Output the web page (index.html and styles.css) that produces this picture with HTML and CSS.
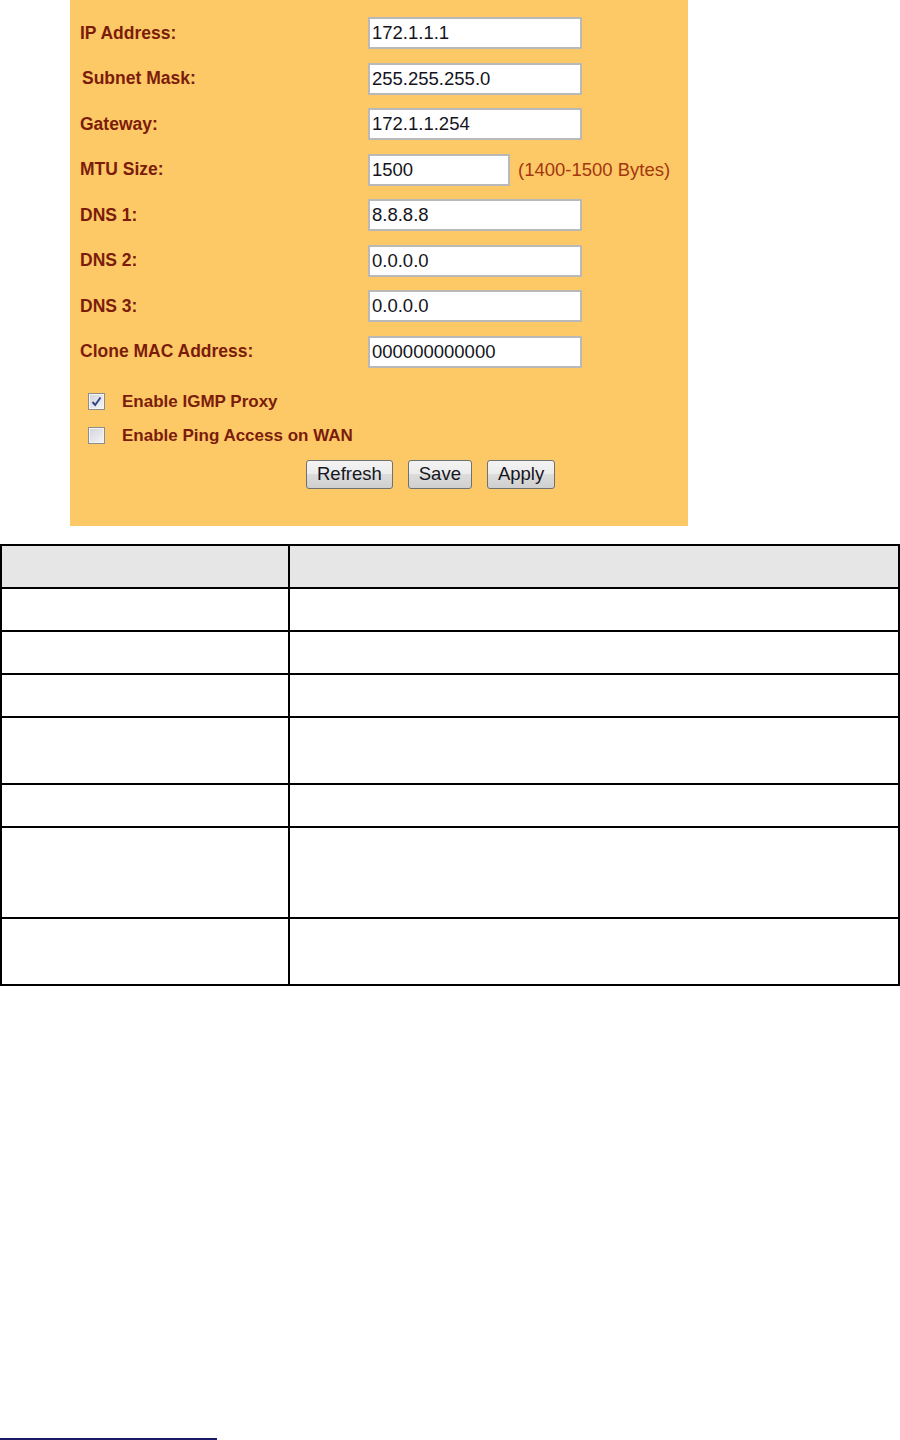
FILE: index.html
```html
<!DOCTYPE html>
<html lang="en">
<head>
  <meta charset="UTF-8">
  <title>WAN Setting</title>
  <link rel="stylesheet" href="styles.css">
</head>
<body>
  <div class="panel">
    <div class="field"><label>IP Address:</label><input class="box" type="text" value="172.1.1.1"></div>
    <div class="field"><label class="nudge">Subnet Mask:</label><input class="box" type="text" value="255.255.255.0"></div>
    <div class="field"><label>Gateway:</label><input class="box" type="text" value="172.1.1.254"></div>
    <div class="field"><label>MTU Size:</label><span class="inline"><input class="box short" type="text" value="1500"><span class="hint">(1400-1500 Bytes)</span></span></div>
    <div class="field"><label>DNS 1:</label><input class="box" type="text" value="8.8.8.8"></div>
    <div class="field"><label>DNS 2:</label><input class="box" type="text" value="0.0.0.0"></div>
    <div class="field"><label>DNS 3:</label><input class="box" type="text" value="0.0.0.0"></div>
    <div class="field"><label>Clone MAC Address:</label><input class="box" type="text" value="000000000000"></div>

    <div class="check first">
      <span class="cb"><svg width="11" height="11" viewBox="0 0 11 11"><path d="M1.5 6 L4.2 9 L9.5 1.5" fill="none" stroke="#34468a" stroke-width="2"/></svg></span>
      Enable IGMP Proxy
    </div>
    <div class="check">
      <span class="cb"></span>
      Enable Ping Access on WAN
    </div>

    <div class="actions">
      <button>Refresh</button>
      <button>Save</button>
      <button>Apply</button>
    </div>
  </div>

  <table class="desc">
    <tr class="head"><td class="c1"></td><td></td></tr>
    <tr class="r43"><td class="c1"></td><td></td></tr>
    <tr class="r43"><td class="c1"></td><td></td></tr>
    <tr class="r43"><td class="c1"></td><td></td></tr>
    <tr class="r67"><td class="c1"></td><td></td></tr>
    <tr class="r43"><td class="c1"></td><td></td></tr>
    <tr class="r91"><td class="c1"></td><td></td></tr>
    <tr class="r67"><td class="c1"></td><td></td></tr>
  </table>

  <div class="rule"></div>
</body>
</html>
```

FILE: styles.css
```css
body {
  margin: 0;
  background: #fff;
  font-family: "Liberation Sans", Arial, sans-serif;
}
.panel {
  box-sizing: border-box;
  width: 618px;
  height: 526px;
  margin-left: 70px;
  padding: 17px 0 0 10px;
  background: #fdc966;
}
.field {
  display: grid;
  grid-template-columns: 288px auto;
  align-items: center;
  height: 32px;
  margin-bottom: 13.5px;
}
.field label {
  font-size: 17.5px;
  font-weight: bold;
  color: #7b1c0b;
}
.field label.nudge {
  padding-left: 2px;
}
.inline {
  display: flex;
  align-items: center;
}
.box {
  box-sizing: border-box;
  width: 214px;
  height: 32px;
  padding: 0 2px;
  border: 2px solid #b9b9b9;
  background: #fff;
  font-family: "Liberation Sans", Arial, sans-serif;
  font-size: 18.5px;
  color: #141420;
  outline: none;
}
.box.short {
  width: 142px;
}
.hint {
  margin-left: 8px;
  font-size: 18.5px;
  color: #a3370f;
}
.check {
  display: flex;
  align-items: center;
  height: 20px;
  padding-left: 8px;
  margin-top: 14px;
  font-size: 17px;
  font-weight: bold;
  color: #7b1c0b;
}
.check.first {
  margin-top: 24px;
}
.cb {
  box-sizing: border-box;
  display: flex;
  align-items: center;
  justify-content: center;
  width: 17px;
  height: 17px;
  margin-right: 17px;
  border: 1px solid #8d8d8d;
  box-shadow: inset 0 0 0 1px #f4f4f4;
  background: linear-gradient(135deg, #cfd3db, #f6f6f8);
}
.actions {
  display: flex;
  gap: 15px;
  margin-top: 14px;
  padding-left: 226px;
}
.actions button {
  height: 29px;
  padding: 0 10px;
  border: 1px solid #707070;
  border-radius: 3px;
  background: linear-gradient(#f3f3f3, #ebebeb 50%, #dcdcdc 50%, #cfcfcf);
  font-family: "Liberation Sans", Arial, sans-serif;
  font-size: 18.5px;
  color: #16161e;
}
.desc {
  width: 900px;
  margin-top: 18px;
  border-collapse: collapse;
  border: 2px solid #000;
}
.desc td {
  padding: 0;
  border: 2px solid #000;
}
.desc td.c1 {
  width: 286px;
}
.desc .head td {
  height: 41px;
  background: #e6e6e6;
}
.desc .r43 td {
  height: 41px;
}
.desc .r67 td {
  height: 65px;
}
.desc .r91 td {
  height: 89px;
}
.rule {
  width: 217px;
  height: 2px;
  margin-top: 452px;
  background: #1a1a66;
}
```
